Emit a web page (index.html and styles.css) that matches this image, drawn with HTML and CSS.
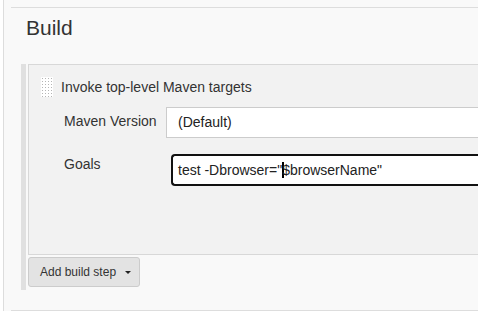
FILE: index.html
```html
<!DOCTYPE html>
<html lang="en">
<head>
    <meta charset="UTF-8">
    <meta name="viewport" content="width=device-width, initial-scale=1.0">
    <title>Build</title>
    <link rel="stylesheet" href="styles.css">
</head>
<body>
    <div class="page">
        <section class="section">
            <h2 class="section-title">Build</h2>

            <div class="steps">
                <div class="step">
                    <div class="step-head">
                        <span class="handle"></span>
                        <span class="step-name">Invoke top-level Maven targets</span>
                    </div>

                    <div class="row">
                        <label class="label">Maven Version</label>
                        <div class="select">(Default)</div>
                    </div>

                    <div class="row row-goals">
                        <label class="label">Goals</label>
                        <div class="field focused">test -Dbrowser="<span class="caret"></span>$browserName"</div>
                    </div>
                </div>

                <button class="add-btn">Add build step <span class="arrow"></span></button>
            </div>
        </section>
    </div>
</body>
</html>
```

FILE: styles.css
```css
body {
    margin: 0;
    background: #fff;
    font-family: "Liberation Sans", Arial, sans-serif;
    color: #333;
    overflow: hidden;
}

.page {
    margin-left: 3px;
    height: 311px;
    padding-top: 7px;
    box-sizing: border-box;
    border-left: 1px solid #ddd;
    background: #f9f9f9;
}

.section {
    margin-left: 7px;
    padding-top: 8px;
    border-top: 1px solid #ddd;
    border-bottom: 1px solid #ddd;
}

.section-title {
    margin: 0 0 24px 15px;
    font-size: 21px;
    line-height: 24px;
    font-weight: normal;
    color: #333;
}

.steps {
    margin-left: 10px;
    padding-left: 2px;
    padding-bottom: 3px;
    margin-bottom: 20px;
    border-left: 5px solid #e0e0e0;
}

.step {
    border: 1px solid #d8d8d8;
    border-right: none;
    background: #f2f2f2;
    padding: 12px 0 68px 0;
}

.step-head {
    display: flex;
    align-items: center;
    gap: 8px;
    padding-left: 12px;
    font-size: 14px;
    line-height: 16px;
}

.handle {
    width: 12px;
    height: 20px;
    background-color: #fff;
    background-image: radial-gradient(circle, #b5b5b5 0.8px, transparent 1px);
    background-size: 3px 3px;
}

.row {
    display: flex;
    align-items: flex-start;
    margin-top: 10px;
    padding-left: 35px;
    font-size: 14px;
}

.label {
    width: 102px;
    flex-shrink: 0;
    padding-top: 6px;
    line-height: 16px;
}

.select {
    flex: 1;
    height: 29px;
    line-height: 29px;
    padding-left: 11px;
    border: 1px solid #ccc;
    border-right: none;
    background: #fff;
    color: #222;
}

.row-goals {
    margin-top: 16px;
}

.row-goals .label {
    padding-top: 2px;
}

.field {
    flex: 1;
    margin-left: 5px;
    height: 28px;
    line-height: 28px;
    padding-left: 5px;
    border: 2px solid #111;
    border-right: none;
    border-radius: 4px 0 0 4px;
    background: #fff;
    color: #222;
}

.caret {
    display: inline-block;
    width: 2px;
    height: 16px;
    margin-right: -2px;
    vertical-align: -3px;
    background: #000;
}

.add-btn {
    display: flex;
    align-items: center;
    margin-top: 2px;
    width: 112px;
    height: 30px;
    padding: 0 0 0 11px;
    border: 1px solid #ccc;
    border-radius: 3px;
    background: #e3e3e3;
    font-family: "Liberation Sans", Arial, sans-serif;
    font-size: 12px;
    color: #333;
}

.arrow {
    margin-left: 9px;
    width: 0;
    height: 0;
    border-left: 3px solid transparent;
    border-right: 3px solid transparent;
    border-top: 3px solid #222;
}
```
